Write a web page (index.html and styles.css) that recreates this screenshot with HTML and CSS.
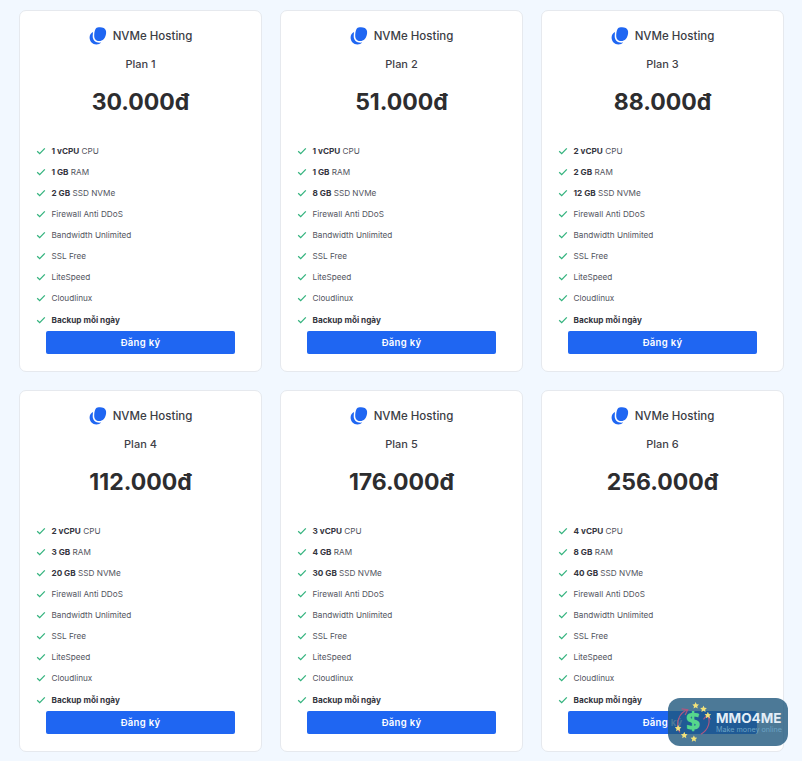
FILE: index.html
```html
<!DOCTYPE html>
<html lang="vi">
<head>
<meta charset="utf-8">
<title>NVMe Hosting</title>
<link rel="stylesheet" href="styles.css">
</head>
<body>
<svg class="defs" width="0" height="0" aria-hidden="true">
<symbol id="logo" viewBox="0 0 18 18"><path d="M4 5C1.800 6 .6 8 .6 10.500c0 4 3 7 6.800 7 2 0 3.700-.8 4.700-2-4.500.8-8.500-1.500-8.400-6.500z" fill="#1f66f2"/><path d="M8.500.5c2-.4 4.500-.4 6.300.5 1.800 1 2.600 3 2.300 5.200-.3 2.200-1 4.400-2.500 6-1.700 1.800-4.800 2.300-7 1.200-2-1-2.500-3-2.400-5.200.1-1.900.3-4 1-5.500C6.600 1.600 7.400.8 8.500.5z" fill="#1f66f2"/></symbol>
<symbol id="check" viewBox="0 0 10 8"><path d="M1.200 4.200 3.700 6.600 8.800 1.400" fill="none" stroke="#34b37e" stroke-width="1.300"/></symbol>
<symbol id="star" viewBox="0 0 10 10"><path d="M5 .3 6.400 3.400 9.800 3.800 7.300 6.100 8 9.500 5 7.800 2 9.500 2.700 6.100.2 3.800 3.600 3.400z" fill="#f3e27a"/></symbol>
</svg>
<main class="grid">
<article class="card">
<div class="brand"><svg class="brand-logo"><use href="#logo"/></svg><span>NVMe Hosting</span></div>
<h2 class="plan">Plan 1</h2>
<p class="price">30.000đ</p>
<ul class="features">
<li><svg class="tick"><use href="#check"/></svg><span><b>1 vCPU</b> CPU</span></li>
<li><svg class="tick"><use href="#check"/></svg><span><b>1 GB</b> RAM</span></li>
<li><svg class="tick"><use href="#check"/></svg><span><b>2 GB</b> SSD NVMe</span></li>
<li><svg class="tick"><use href="#check"/></svg><span>Firewall Anti DDoS</span></li>
<li><svg class="tick"><use href="#check"/></svg><span>Bandwidth Unlimited</span></li>
<li><svg class="tick"><use href="#check"/></svg><span>SSL Free</span></li>
<li><svg class="tick"><use href="#check"/></svg><span>LiteSpeed</span></li>
<li><svg class="tick"><use href="#check"/></svg><span>Cloudlinux</span></li>
<li><svg class="tick"><use href="#check"/></svg><span><b>Backup mỗi ngày</b></span></li>
</ul>
<a class="cta">Đăng ký</a>
</article>
<article class="card">
<div class="brand"><svg class="brand-logo"><use href="#logo"/></svg><span>NVMe Hosting</span></div>
<h2 class="plan">Plan 2</h2>
<p class="price">51.000đ</p>
<ul class="features">
<li><svg class="tick"><use href="#check"/></svg><span><b>1 vCPU</b> CPU</span></li>
<li><svg class="tick"><use href="#check"/></svg><span><b>1 GB</b> RAM</span></li>
<li><svg class="tick"><use href="#check"/></svg><span><b>8 GB</b> SSD NVMe</span></li>
<li><svg class="tick"><use href="#check"/></svg><span>Firewall Anti DDoS</span></li>
<li><svg class="tick"><use href="#check"/></svg><span>Bandwidth Unlimited</span></li>
<li><svg class="tick"><use href="#check"/></svg><span>SSL Free</span></li>
<li><svg class="tick"><use href="#check"/></svg><span>LiteSpeed</span></li>
<li><svg class="tick"><use href="#check"/></svg><span>Cloudlinux</span></li>
<li><svg class="tick"><use href="#check"/></svg><span><b>Backup mỗi ngày</b></span></li>
</ul>
<a class="cta">Đăng ký</a>
</article>
<article class="card">
<div class="brand"><svg class="brand-logo"><use href="#logo"/></svg><span>NVMe Hosting</span></div>
<h2 class="plan">Plan 3</h2>
<p class="price">88.000đ</p>
<ul class="features">
<li><svg class="tick"><use href="#check"/></svg><span><b>2 vCPU</b> CPU</span></li>
<li><svg class="tick"><use href="#check"/></svg><span><b>2 GB</b> RAM</span></li>
<li><svg class="tick"><use href="#check"/></svg><span><b>12 GB</b> SSD NVMe</span></li>
<li><svg class="tick"><use href="#check"/></svg><span>Firewall Anti DDoS</span></li>
<li><svg class="tick"><use href="#check"/></svg><span>Bandwidth Unlimited</span></li>
<li><svg class="tick"><use href="#check"/></svg><span>SSL Free</span></li>
<li><svg class="tick"><use href="#check"/></svg><span>LiteSpeed</span></li>
<li><svg class="tick"><use href="#check"/></svg><span>Cloudlinux</span></li>
<li><svg class="tick"><use href="#check"/></svg><span><b>Backup mỗi ngày</b></span></li>
</ul>
<a class="cta">Đăng ký</a>
</article>
<article class="card">
<div class="brand"><svg class="brand-logo"><use href="#logo"/></svg><span>NVMe Hosting</span></div>
<h2 class="plan">Plan 4</h2>
<p class="price">112.000đ</p>
<ul class="features">
<li><svg class="tick"><use href="#check"/></svg><span><b>2 vCPU</b> CPU</span></li>
<li><svg class="tick"><use href="#check"/></svg><span><b>3 GB</b> RAM</span></li>
<li><svg class="tick"><use href="#check"/></svg><span><b>20 GB</b> SSD NVMe</span></li>
<li><svg class="tick"><use href="#check"/></svg><span>Firewall Anti DDoS</span></li>
<li><svg class="tick"><use href="#check"/></svg><span>Bandwidth Unlimited</span></li>
<li><svg class="tick"><use href="#check"/></svg><span>SSL Free</span></li>
<li><svg class="tick"><use href="#check"/></svg><span>LiteSpeed</span></li>
<li><svg class="tick"><use href="#check"/></svg><span>Cloudlinux</span></li>
<li><svg class="tick"><use href="#check"/></svg><span><b>Backup mỗi ngày</b></span></li>
</ul>
<a class="cta">Đăng ký</a>
</article>
<article class="card">
<div class="brand"><svg class="brand-logo"><use href="#logo"/></svg><span>NVMe Hosting</span></div>
<h2 class="plan">Plan 5</h2>
<p class="price">176.000đ</p>
<ul class="features">
<li><svg class="tick"><use href="#check"/></svg><span><b>3 vCPU</b> CPU</span></li>
<li><svg class="tick"><use href="#check"/></svg><span><b>4 GB</b> RAM</span></li>
<li><svg class="tick"><use href="#check"/></svg><span><b>30 GB</b> SSD NVMe</span></li>
<li><svg class="tick"><use href="#check"/></svg><span>Firewall Anti DDoS</span></li>
<li><svg class="tick"><use href="#check"/></svg><span>Bandwidth Unlimited</span></li>
<li><svg class="tick"><use href="#check"/></svg><span>SSL Free</span></li>
<li><svg class="tick"><use href="#check"/></svg><span>LiteSpeed</span></li>
<li><svg class="tick"><use href="#check"/></svg><span>Cloudlinux</span></li>
<li><svg class="tick"><use href="#check"/></svg><span><b>Backup mỗi ngày</b></span></li>
</ul>
<a class="cta">Đăng ký</a>
</article>
<article class="card">
<div class="brand"><svg class="brand-logo"><use href="#logo"/></svg><span>NVMe Hosting</span></div>
<h2 class="plan">Plan 6</h2>
<p class="price">256.000đ</p>
<ul class="features">
<li><svg class="tick"><use href="#check"/></svg><span><b>4 vCPU</b> CPU</span></li>
<li><svg class="tick"><use href="#check"/></svg><span><b>8 GB</b> RAM</span></li>
<li><svg class="tick"><use href="#check"/></svg><span><b>40 GB</b> SSD NVMe</span></li>
<li><svg class="tick"><use href="#check"/></svg><span>Firewall Anti DDoS</span></li>
<li><svg class="tick"><use href="#check"/></svg><span>Bandwidth Unlimited</span></li>
<li><svg class="tick"><use href="#check"/></svg><span>SSL Free</span></li>
<li><svg class="tick"><use href="#check"/></svg><span>LiteSpeed</span></li>
<li><svg class="tick"><use href="#check"/></svg><span>Cloudlinux</span></li>
<li><svg class="tick"><use href="#check"/></svg><span><b>Backup mỗi ngày</b></span></li>
</ul>
<a class="cta">Đăng ký</a>
</article>
</main>
<aside class="badge">
<svg class="badge-icon" viewBox="0 0 48 48">
<path d="M18 10C8 13 3 26 9 36" fill="none" stroke="#b0567f" stroke-width="1.300"/>
<path d="M11 9 18 10 15 16" fill="none" stroke="#b0567f" stroke-width="1.300"/>
<path d="M33 38C42 33 45 22 40 16" fill="none" stroke="#b0567f" stroke-width="1.300"/>
<path d="M36 21 40 16 44 21" fill="none" stroke="#b0567f" stroke-width="1.300"/>
<text class="badge-dollar" x="24" y="33" text-anchor="middle">$</text>
<use href="#star" x="23" y="1" width="8" height="8"/>
<use href="#star" x="32" y="5" width="8" height="8"/>
<use href="#star" x="37" y="12" width="8" height="8"/>
<use href="#star" x="3" y="27" width="8" height="8"/>
<use href="#star" x="10" y="35" width="8" height="8"/>
<use href="#star" x="21" y="39" width="8" height="8"/>
</svg>
<div class="badge-text"><strong>MMO4ME</strong><small>Make money online</small></div>
</aside>
</body>
</html>
```
FILE: styles.css
```css
* { box-sizing: border-box; }
html, body { margin: 0; height: 761px; overflow: hidden; }
body { background: #f2f8ff; font-family: Inter, "Liberation Sans", sans-serif; color: #2f2f36; position: relative; }
.defs { position: absolute; }
.grid { display: grid; grid-template-columns: repeat(3, 243px); gap: 18px; padding: 9.500px 0 0 19px; }
.card { height: 362px; background: #fff; border: 1px solid #e6e9ee; border-radius: 7px; padding: 15.500px 26px 0; display: flex; flex-direction: column; }
.brand { display: flex; justify-content: center; align-items: center; gap: 6px; height: 20px; font-size: 11.500px; font-weight: 500; color: #3b3d45; }
.brand-logo { width: 18px; height: 18px; }
.plan { margin: 9px 0 0; height: 18px; line-height: 18px; text-align: center; font-size: 11px; font-weight: 500; color: #3f4148; }
.price { margin: 12.500px 0 0; height: 32px; line-height: 32px; text-align: center; font-size: 23px; font-weight: 700; color: #2d2d2f; }
.features { list-style: none; margin: 26px 0 0 -10px; padding: 0; display: flex; flex-direction: column; gap: 7.150px; }
.features li { display: flex; align-items: center; gap: 5.500px; height: 14px; font-size: 8.200px; color: #52545e; }
.features b { font-weight: 700; color: #34353e; }
.tick { width: 10px; height: 8px; flex: none; }
.cta { display: flex; align-items: center; justify-content: center; height: 23px; margin-top: 4.500px; background: #1f66f2; border-radius: 2px; color: #fff; font-size: 9.500px; font-weight: 600; letter-spacing: .3px; }
.badge { position: absolute; left: 668px; top: 698px; width: 120px; height: 48px; border-radius: 12px; background: rgba(31, 87, 125, .8); display: flex; align-items: center; padding-left: 4px; }
.badge-icon { width: 42px; height: 42px; flex: none; }
.badge-dollar { font-family: "Open Sans", sans-serif; font-size: 28px; font-weight: 800; fill: #56d68c; }
.badge-text { display: flex; flex-direction: column; margin-left: 2px; }
.badge-text strong { font-family: Inter, sans-serif; font-size: 13.500px; line-height: 14px; font-weight: 700; color: #e4eef7; }
.badge-text small { font-size: 7.200px; line-height: 9px; color: #6ba3c4; white-space: nowrap; }
```
